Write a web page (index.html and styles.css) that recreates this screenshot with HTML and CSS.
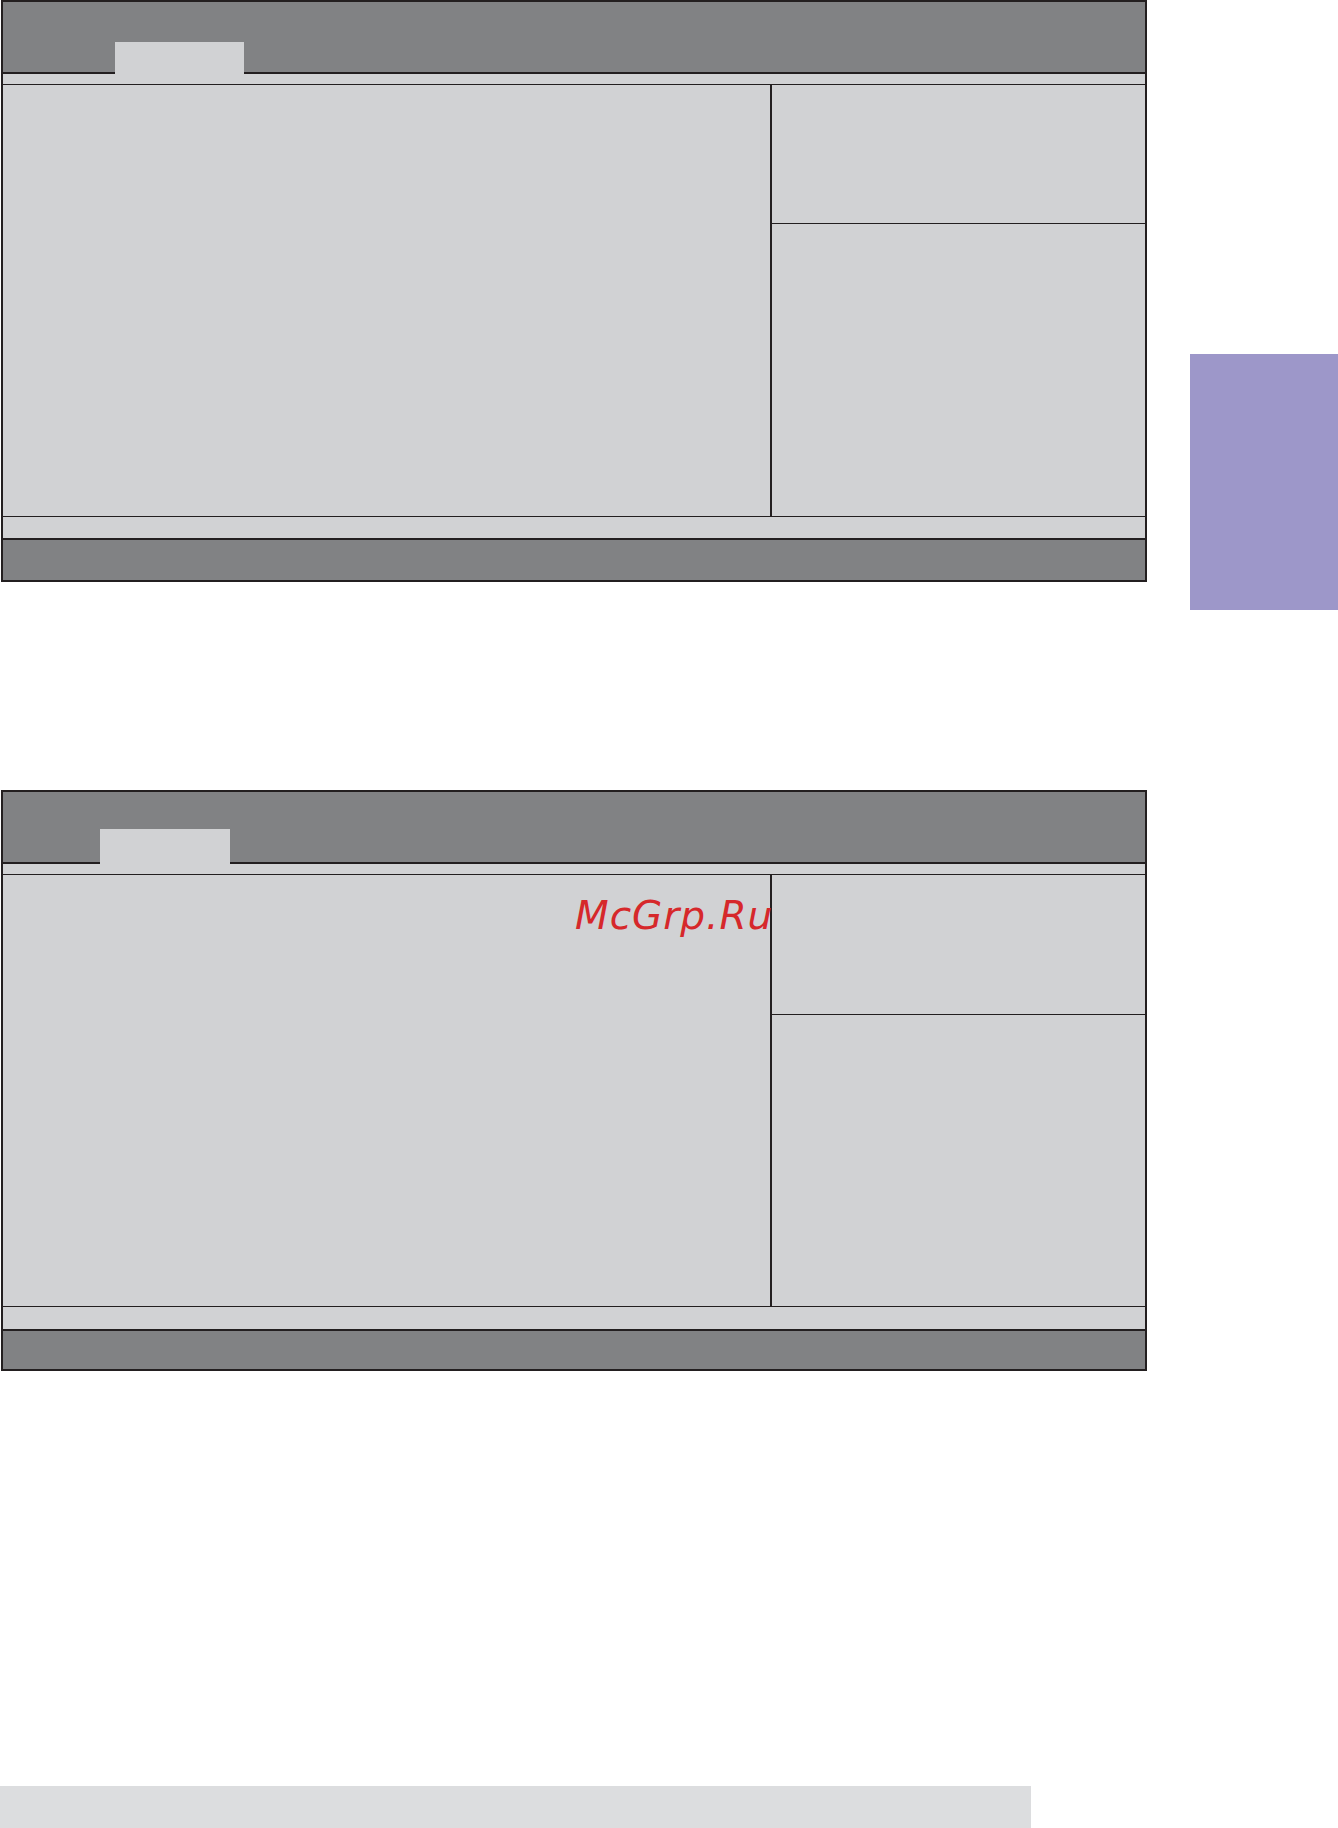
FILE: index.html
```html
<!DOCTYPE html>
<html lang="en">
<head>
<meta charset="utf-8">
<title>BIOS setup screens</title>
<link rel="stylesheet" href="styles.css">
</head>
<body>
<div class="page">
  <div class="screens">
    <section class="bios bios-first">
      <div class="bios-head"><div class="bios-tab"></div></div>
      <div class="bios-sub"></div>
      <div class="bios-body">
        <div class="bios-main"></div>
        <div class="bios-side">
          <div class="bios-help-top"></div>
          <div class="bios-help"></div>
        </div>
      </div>
      <div class="bios-status"></div>
      <div class="bios-keys"></div>
    </section>

    <section class="bios bios-second">
      <div class="bios-head"><div class="bios-tab"></div></div>
      <div class="bios-sub"></div>
      <div class="bios-body">
        <div class="bios-main"></div>
        <div class="bios-side">
          <div class="bios-help-top"></div>
          <div class="bios-help"></div>
        </div>
        <span class="watermark">McGrp.Ru</span>
      </div>
      <div class="bios-status"></div>
      <div class="bios-keys"></div>
    </section>
  </div>
  <aside class="side">
    <div class="chapter-tab"></div>
  </aside>
</div>
<div class="footer-bar"></div>
</body>
</html>
```

FILE: styles.css
```css
html, body {
  margin: 0;
  padding: 0;
  background: #ffffff;
  font-family: "DejaVu Sans", "Liberation Sans", sans-serif;
}

.page {
  display: flex;
  align-items: flex-start;
}

.screens {
  margin-left: 1px;
  width: 1146px;
  display: flex;
  flex-direction: column;
}

.bios {
  box-sizing: border-box;
  width: 1146px;
  border: 2px solid #231f20;
  background: #d1d2d4;
  display: flex;
  flex-direction: column;
}

.bios-second {
  margin-top: 208px;
}

.bios-head {
  height: 70px;
  background: #818284;
  border-bottom: 2px solid #231f20;
  display: flex;
  align-items: flex-end;
  padding-left: 112px;
}

.bios-tab {
  width: 129px;
  height: 32px;
  margin-bottom: -2px;
  background: #d1d2d4;
}

.bios-second .bios-head {
  padding-left: 97px;
}

.bios-second .bios-tab {
  width: 130px;
  height: 35px;
}

.bios-sub {
  height: 10px;
  border-bottom: 1px solid #231f20;
}

.bios-body {
  position: relative;
  height: 431px;
  display: flex;
}

.bios-main {
  width: 767px;
  border-right: 2px solid #231f20;
}

.bios-side {
  flex: 1;
  display: flex;
  flex-direction: column;
}

.bios-help-top {
  height: 138px;
  border-bottom: 1px solid #231f20;
}

.bios-second .bios-help-top {
  height: 139px;
}

.bios-help {
  flex: 1;
}

.bios-status {
  height: 21px;
  border-top: 1px solid #231f20;
  border-bottom: 2px solid #231f20;
}

.bios-second .bios-status {
  height: 22px;
}

.bios-keys {
  height: 40px;
  background: #818284;
}

.bios-second .bios-keys {
  height: 38px;
}

.watermark {
  position: absolute;
  left: 572px;
  top: 21px;
  font-family: "DejaVu Sans", sans-serif;
  font-style: oblique;
  font-size: 39px;
  line-height: 39px;
  letter-spacing: 1px;
  color: #d6282b;
  white-space: nowrap;
}

.side {
  margin-left: 43px;
  flex: 1;
}

.chapter-tab {
  margin-top: 354px;
  height: 256px;
  background: #9d97c9;
}

.footer-bar {
  margin-top: 415px;
  width: 1031px;
  height: 42px;
  background: #dcdddf;
}
```
